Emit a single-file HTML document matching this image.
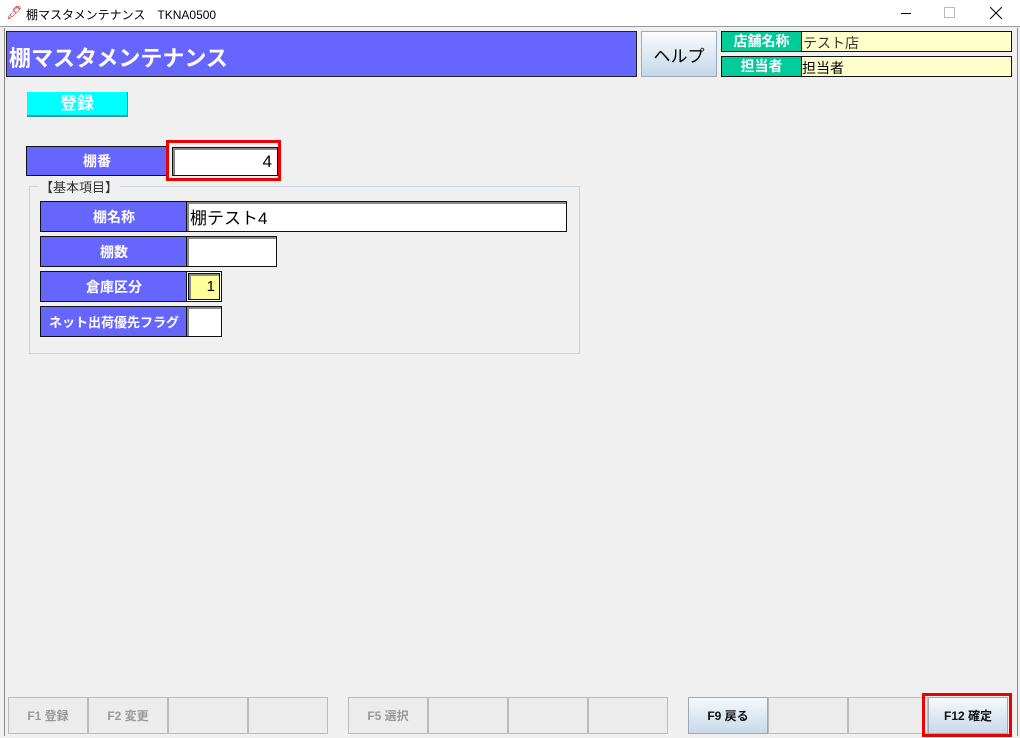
<!DOCTYPE html>
<html><head><meta charset="utf-8"><style>
*{box-sizing:border-box;margin:0;padding:0}
body{width:1020px;height:738px;background:#f0f0f0;position:relative;overflow:hidden;font-family:"Liberation Sans","Noto Sans CJK JP",sans-serif}
.a{position:absolute}
.lab{position:absolute;background:#6666ff;border:1px solid #111;color:#fff;font-weight:bold;font-size:14px;display:flex;align-items:center;justify-content:center}
.inp{position:absolute;background:#fff;border:1px solid #111;box-shadow:inset 2px 2px 0 #888;font-size:17px;display:flex;align-items:center;padding-left:3px}
.btn{position:absolute;top:697px;height:37px;width:80px;border:1px solid #bbb;background:#ececec;color:#999;font-size:12px;font-weight:bold;display:flex;align-items:center;justify-content:center}
.btn.on{background:linear-gradient(#f6f9fc,#c9d9ea);color:#111;border-color:#9ab}
</style></head><body>
<div class="a" style="left:0;top:0;width:1020px;height:27px;background:#fff;border-bottom:1px solid #999"></div>
<div class="a" style="left:6px;top:5px;font-size:13px;color:#c33">🖋</div>
<div class="a" style="left:26px;top:6px;font-size:12px;color:#000">棚マスタメンテナンス　TKNA0500</div>
<div class="a" style="left:901px;top:13px;width:10px;height:1px;background:#000"></div>
<div class="a" style="left:944px;top:7px;width:11px;height:11px;border:1px solid #bbb"></div>
<svg class="a" style="left:990px;top:7px" width="12" height="12"><path d="M0 0L12 12M12 0L0 12" stroke="#000" stroke-width="1"/></svg>
<div class="a" style="left:4px;top:28px;width:1px;height:708px;background:#888"></div>
<div class="a" style="left:1017px;top:28px;width:1px;height:708px;background:#888"></div>

<div class="a" style="left:6px;top:31px;width:631px;height:46px;background:#6666ff;border:1px solid #222;color:#fff;font-weight:bold;font-size:22px;padding:9px 0 0 2px">棚マスタメンテナンス</div>
<div class="a" style="left:641px;top:31px;width:76px;height:46px;background:linear-gradient(#fbfcfe,#c5d6e8);border:1px solid #9ab;font-size:17px;display:flex;align-items:center;justify-content:center">ヘルプ</div>
<div class="a" style="left:721px;top:31px;width:291px;height:21px;background:#ffffcc;border:1px solid #111"></div>
<div class="a" style="left:721px;top:31px;width:81px;height:21px;background:#00cc99;border:1px solid #111;color:#fff;font-weight:bold;font-size:14px;text-align:center;line-height:19px">店舗名称</div>
<div class="a" style="left:803px;top:33px;font-size:14px;color:#333">テスト店</div>
<div class="a" style="left:721px;top:56px;width:291px;height:21px;background:#ffffcc;border:1px solid #111"></div>
<div class="a" style="left:721px;top:56px;width:81px;height:21px;background:#00cc99;border:1px solid #111;color:#fff;font-weight:bold;font-size:14px;text-align:center;line-height:19px">担当者</div>
<div class="a" style="left:802px;top:58px;font-size:14px">担当者</div>

<div class="a" style="left:27px;top:92px;width:101px;height:25px;background:#00ffff;border-bottom:2px solid #399;border-right:1px solid #399;color:#fff;font-weight:bold;font-size:17px;text-align:center;line-height:23px">登録</div>

<div class="lab" style="left:26px;top:146px;width:142px;height:30px">棚番</div>
<div class="a" style="left:166px;top:140px;width:115px;height:41px;border:3px solid #e00"></div>
<div class="inp" style="left:172px;top:147px;width:106px;height:29px;justify-content:flex-end;padding-right:5px">4</div>

<div class="a" style="left:29px;top:186px;width:551px;height:168px;border:1px solid #c8d4e0"></div>
<div class="a" style="left:38px;top:177px;background:#f0f0f0;font-size:13px;color:#333;padding:0 2px">【基本項目】</div>

<div class="lab" style="left:40px;top:201px;width:148px;height:31px">棚名称</div>
<div class="inp" style="left:186px;top:201px;width:381px;height:31px">棚テスト4</div>
<div class="lab" style="left:40px;top:236px;width:148px;height:31px">棚数</div>
<div class="inp" style="left:186px;top:236px;width:91px;height:31px"></div>
<div class="lab" style="left:40px;top:271px;width:148px;height:31px">倉庫区分</div>
<div class="a" style="left:186px;top:271px;width:36px;height:31px;border:1px solid #111;background:#fff"></div>
<div class="inp" style="left:188px;top:273px;width:32px;height:27px;background:#ffff99;justify-content:flex-end;padding-right:4px;font-size:15px">1</div>
<div class="lab" style="left:40px;top:306px;width:148px;height:31px;font-size:13px">ネット出荷優先フラグ</div>
<div class="inp" style="left:186px;top:306px;width:36px;height:31px"></div>

<div class="btn" style="left:8px">F1 登録</div>
<div class="btn" style="left:88px">F2 変更</div>
<div class="btn" style="left:168px"></div>
<div class="btn" style="left:248px"></div>
<div class="btn" style="left:348px">F5 選択</div>
<div class="btn" style="left:428px"></div>
<div class="btn" style="left:508px"></div>
<div class="btn" style="left:588px"></div>
<div class="btn on" style="left:688px">F9 戻る</div>
<div class="btn" style="left:768px"></div>
<div class="btn" style="left:848px"></div>
<div class="btn on" style="left:928px">F12 確定</div>
<div class="a" style="left:922px;top:693px;width:90px;height:44px;border:3px solid #e00"></div>
</body></html>
